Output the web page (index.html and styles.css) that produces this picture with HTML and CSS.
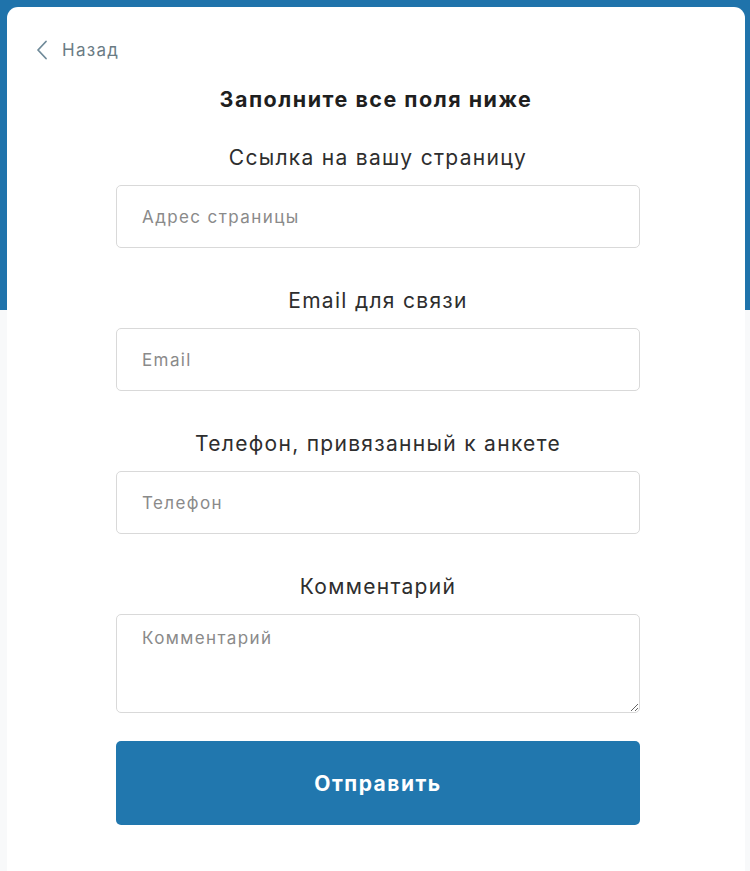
FILE: index.html
```html
<!DOCTYPE html>
<html lang="ru">
<head>
<meta charset="utf-8">
<title>Заполните все поля ниже</title>
<link rel="stylesheet" href="styles.css">
</head>
<body>
<div class="band"></div>
<main class="card">
  <a class="back" href="#">
    <svg class="chev" width="12" height="20" viewBox="0 0 12 20"><path d="M10 1.5 L2 10 L10 18.5" fill="none" stroke="#6f8a99" stroke-width="1.8" stroke-linecap="round" stroke-linejoin="round"/></svg>
    <span>Назад</span>
  </a>
  <h1 class="title">Заполните все поля ниже</h1>
  <form class="form">
    <label class="field">
      <span class="label">Ссылка на вашу страницу</span>
      <input class="input" type="text" placeholder="Адрес страницы">
    </label>
    <label class="field">
      <span class="label">Email для связи</span>
      <input class="input" type="text" placeholder="Email">
    </label>
    <label class="field">
      <span class="label">Телефон, привязанный к анкете</span>
      <input class="input" type="text" placeholder="Телефон">
    </label>
    <label class="field">
      <span class="label">Комментарий</span>
      <textarea class="input area" placeholder="Комментарий"></textarea>
    </label>
    <button class="submit" type="button">Отправить</button>
  </form>
</main>
</body>
</html>
```
FILE: styles.css
```css
* { box-sizing: border-box; }
html, body { margin: 0; padding: 0; }
body {
  background: #f8f9fa;
  font-family: Inter, "DejaVu Sans", sans-serif;
  color: #2b2b2b;
  position: relative;
  min-height: 871px;
  overflow: hidden;
}
.band {
  position: absolute;
  left: 0; top: 0; right: 0;
  height: 310px;
  background: #1f73ab;
}
.card {
  position: relative;
  margin: 7px 5px 0 7px;
  min-height: 900px;
  background: #fff;
  border-radius: 11px;
  padding: 28px 0 0 0;
}
.back {
  display: flex;
  align-items: center;
  gap: 14px;
  margin-left: 29px;
  width: max-content;
  text-decoration: none;
  color: #6a7b84;
  font-size: 17px;
  letter-spacing: 1.3px;
  height: 30px;
}
.chev { display: block; }
.title {
  margin: 20px 0 0 0;
  text-align: center;
  font-size: 21.5px;
  font-weight: 700;
  line-height: 28px;
  color: #1f1f1f;
  letter-spacing: 1.5px;
}
.form {
  width: 524px;
  margin: 30px 0 0 calc(50% - 260px);
  display: flex;
  flex-direction: column;
}
.field {
  display: flex;
  flex-direction: column;
  margin-bottom: 38px;
}
.field:last-of-type { margin-bottom: 28px; }
.label {
  text-align: center;
  font-size: 21px;
  line-height: 30px;
  margin-bottom: 12px;
  color: #2e2e2e;
  letter-spacing: 1.3px;
}
.input {
  height: 63px;
  border: 1px solid #d9d9d9;
  border-radius: 5px;
  padding: 0 25px;
  font-family: inherit;
  font-size: 17px;
  color: #333;
  background: #fff;
  outline: none;
  letter-spacing: 1.4px;
}
.input::placeholder { color: #8a8a8a; }
.area {
  height: 99px;
  padding: 12px 25px;
  resize: vertical;
  line-height: 22px;
}
.submit {
  height: 84px;
  border: none;
  border-radius: 5px;
  background: #2177ae;
  color: #fff;
  font-family: inherit;
  font-size: 21px;
  font-weight: 700;
  letter-spacing: 1.5px;
  cursor: pointer;
}
```
